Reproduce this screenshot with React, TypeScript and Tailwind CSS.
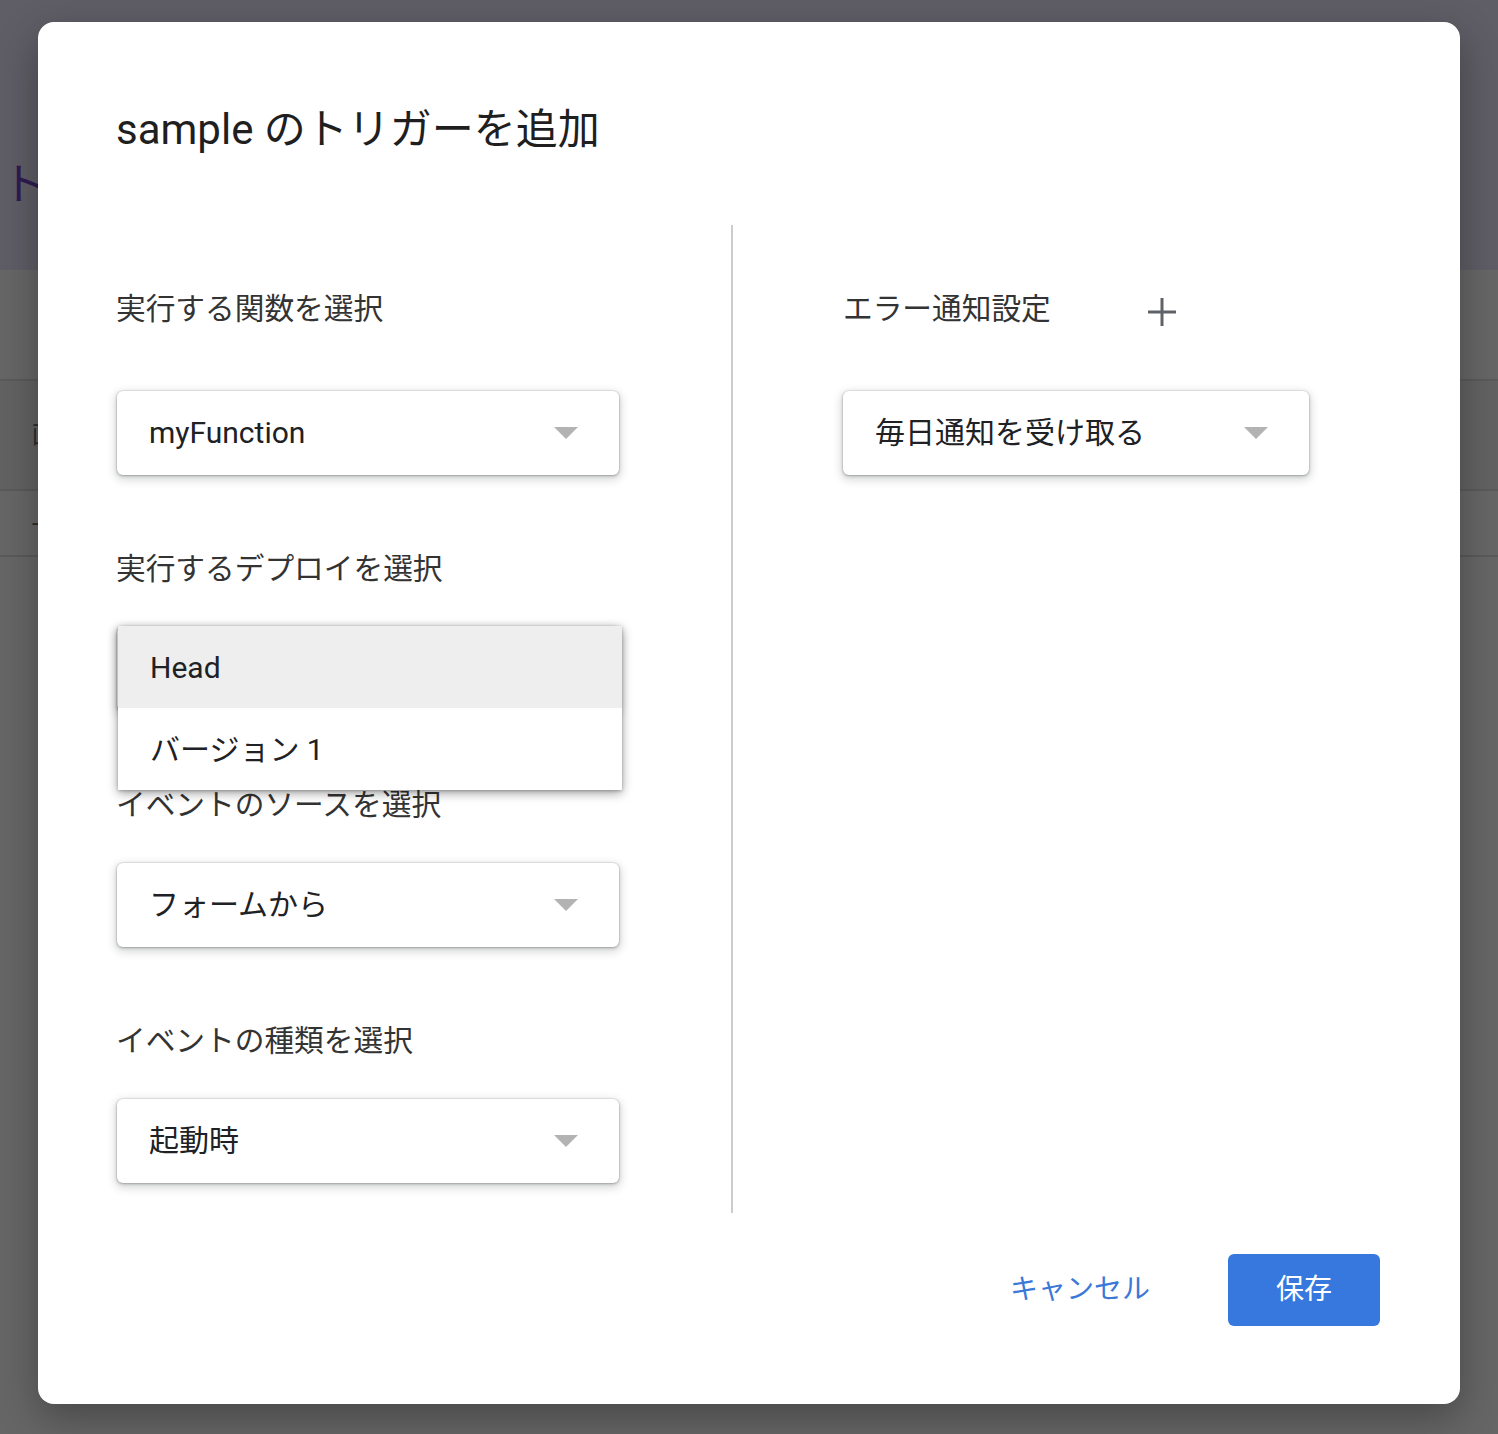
import React from "react";

function Arrow() {
  return (
    <svg width="24" height="12" viewBox="0 0 24 12" className="shrink-0">
      <path d="M0 0 L24 0 L12 12 Z" fill="#b3b3b3" />
    </svg>
  );
}

function Select({ value, width }: { value: string; width: string }) {
  return (
    <div
      className={`${width} h-[84px] bg-white rounded-[6px] flex items-center justify-between pl-[32px] pr-[41px] shadow-[0_0_0_1px_rgba(0,0,0,0.05),0_1px_3px_rgba(60,64,67,0.35),0_3px_9px_2px_rgba(60,64,67,0.2)]`}
    >
      <span className="text-[30px] leading-[40px] text-[#202124]">{value}</span>
      <Arrow />
    </div>
  );
}

function Label({ children }: { children: React.ReactNode }) {
  return <div className="text-[29.7px] leading-[40px] text-[#333333] whitespace-nowrap">{children}</div>;
}

export default function App() {
  return (
    <div className="relative w-[1498px] h-[1434px] overflow-hidden bg-[#666666] font-['Roboto','Noto_Sans_CJK_JP',sans-serif]">
      {/* background page (dimmed) */}
      <div className="h-[270px] bg-[#5f5d65] pl-[2px] pt-[155px]">
        <div className="text-[44px] leading-[60px] text-[#2e1a52]">トリガー</div>
      </div>
      <div className="h-[111px] border-b-2 border-[#5a5a5a]" />
      <div className="h-[110px] border-b-2 border-[#5a5a5a] bg-[#626262] pl-[32px] flex items-center">
        <span className="text-[24px] text-[#2a2a2a]">画面</span>
      </div>
      <div className="h-[66px] border-b-2 border-[#5a5a5a] pl-[32px] flex items-center">
        <span className="text-[24px] text-[#2a2a2a]">-</span>
      </div>

      {/* dialog */}
      <div className="absolute left-[38px] top-[22px] w-[1422px] h-[1382px] bg-white rounded-[16px] shadow-[0_14px_40px_rgba(0,0,0,0.3)] pl-[78px] pr-[80px] pt-[83px] flex flex-col">
        <h1 className="text-[42px] leading-[50px] text-[#1f1f1f] font-normal whitespace-nowrap">
          sample のトリガーを追加
        </h1>

        <div className="mt-[70px] flex items-start">
          {/* left column */}
          <div className="w-[615px] flex flex-col">
            <div className="mt-[64px]">
              <Label>実行する関数を選択</Label>
            </div>
            <div className="mt-[62px] ml-[1px]">
              <Select value="myFunction" width="w-[502px]" />
            </div>

            <div className="mt-[74px]">
              <Label>実行するデプロイを選択</Label>
            </div>
            <div className="mt-[38px] ml-[1px] relative">
              <Select value="Head" width="w-[502px]" />
              <div className="absolute left-[1px] top-[-1px] w-[504px] bg-white shadow-[0_3px_10px_rgba(0,0,0,0.38),0_1px_3px_rgba(0,0,0,0.22)] z-10 flex flex-col">
                <div className="h-[82px] bg-[#eeeeee] flex items-center pl-[32px] text-[30px] text-[#202124]">
                  Head
                </div>
                <div className="h-[82px] bg-white flex items-center pl-[32px] text-[30px] text-[#202124]">
                  バージョン 1
                </div>
              </div>
            </div>

            <div className="mt-[74px]">
              <Label>イベントのソースを選択</Label>
            </div>
            <div className="mt-[38px] ml-[1px]">
              <Select value="フォームから" width="w-[502px]" />
            </div>

            <div className="mt-[74px]">
              <Label>イベントの種類を選択</Label>
            </div>
            <div className="mt-[38px] ml-[1px]">
              <Select value="起動時" width="w-[502px]" />
            </div>
          </div>

          {/* divider */}
          <div className="w-[2px] h-[988px] bg-[#cccccc] shrink-0" />

          {/* right column */}
          <div className="ml-[110px] flex flex-col">
            <div className="mt-[64px] flex items-center">
              <Label>エラー通知設定</Label>
              <svg width="28" height="28" viewBox="0 0 28 28" className="ml-[97px] mt-[6px]">
                <rect x="12.5" y="0" width="3" height="28" fill="#5f6368" />
                <rect x="0" y="12.5" width="28" height="3" fill="#5f6368" />
              </svg>
            </div>
            <div className="mt-[62px]">
              <Select value="毎日通知を受け取る" width="w-[466px]" />
            </div>
          </div>
        </div>

        {/* actions */}
        <div className="mt-[41px] flex items-center justify-end gap-[78px]">
          <button className="text-[28px] leading-[40px] text-[#3b78d8]">キャンセル</button>
          <button className="w-[152px] h-[72px] rounded-[6px] bg-[#3778df] text-white text-[28px] flex items-center justify-center">
            保存
          </button>
        </div>
      </div>
    </div>
  );
}
